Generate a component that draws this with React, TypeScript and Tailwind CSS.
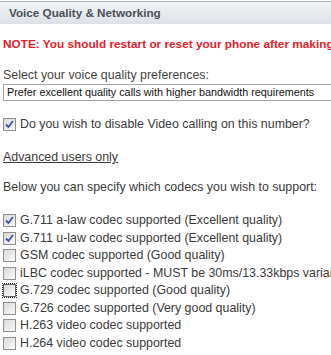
import React from "react";

const codecs: { label: string; checked: boolean; focus?: boolean }[] = [
  { label: "G.711 a-law codec supported (Excellent quality)", checked: true },
  { label: "G.711 u-law codec supported (Excellent quality)", checked: true },
  { label: "GSM codec supported (Good quality)", checked: false },
  { label: "iLBC codec supported - MUST be 30ms/13.33kbps variant", checked: false },
  { label: "G.729 codec supported (Good quality)", checked: false, focus: true },
  { label: "G.726 codec supported (Very good quality)", checked: false },
  { label: "H.263 video codec supported", checked: false },
  { label: "H.264 video codec supported", checked: false },
];

function Box({ checked, focus }: { checked: boolean; focus?: boolean }) {
  return (
    <span
      className={`relative inline-flex h-[13px] w-[13px] shrink-0 items-center justify-center border bg-gradient-to-br from-[#d8d8d8] to-[#fbfbfb] ${
        focus ? "border-[#666] outline outline-1 outline-dotted outline-[#222]" : "border-[#8e8f8f]"
      }`}
    >
      {checked && (
        <svg width="9" height="9" viewBox="0 0 9 9" className="block">
          <path d="M1 4.5 L3.5 7 L8 1" fill="none" stroke="#3d4fa8" strokeWidth="1.8" />
        </svg>
      )}
    </span>
  );
}

export default function App() {
  return (
    <div className="w-[331px] h-[355px] overflow-hidden bg-white font-['Liberation_Sans',Arial,sans-serif] text-[12.4px] text-[#3a3a3a]">
      <div className="mt-[1px] h-[23px] border-t border-[#aeb3b9] bg-gradient-to-b from-[#f2f4f6] to-[#dde1e6] pl-[9px] flex items-center text-[11.7px] font-bold text-[#4a5058]">
        Voice Quality &amp; Networking
      </div>
      <div className="pl-[3px]">
        <div className="mt-[13px] whitespace-nowrap text-[11.8px] font-bold text-[#e3202b] leading-[15px]">
          NOTE: You should restart or reset your phone after making these changes
        </div>
        <div className="mt-[16px] whitespace-nowrap leading-[15px] text-[#444]">
          Select your voice quality preferences:
        </div>
        <div className="mt-[1px] h-[17px] w-[360px] border border-[#a5a5a5] pl-[3px] flex items-center whitespace-nowrap text-[10.8px] text-[#111]">
          Prefer excellent quality calls with higher bandwidth requirements
        </div>
        <div className="mt-[16px] flex items-center gap-[4px] whitespace-nowrap leading-[15px]">
          <Box checked />
          <span>Do you wish to disable Video calling on this number?</span>
        </div>
        <div className="mt-[18px] underline whitespace-nowrap leading-[15px]">Advanced users only</div>
        <div className="mt-[15px] whitespace-nowrap leading-[15px]">
          Below you can specify which codecs you wish to support:
        </div>
        <div className="mt-[17px] flex flex-col">
          {codecs.map((c) => (
            <div key={c.label} className="flex h-[17.5px] items-center gap-[4px] whitespace-nowrap">
              <Box checked={c.checked} focus={c.focus} />
              <span>{c.label}</span>
            </div>
          ))}
        </div>
      </div>
    </div>
  );
}
